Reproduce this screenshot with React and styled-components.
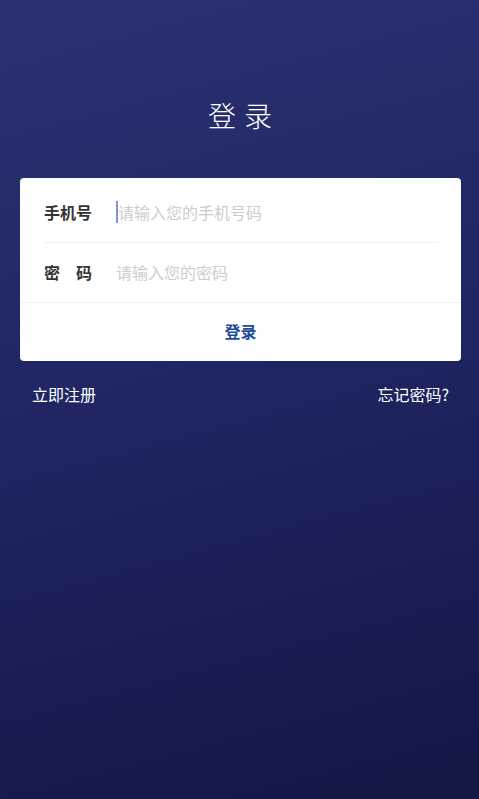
import React from 'react'
import styled, { createGlobalStyle } from 'styled-components'

const GlobalStyle = createGlobalStyle`
    * { box-sizing: border-box; }
    html, body { margin: 0; padding: 0; }
    body {
        font-family: "Noto Sans CJK SC", "Noto Sans", sans-serif;
        background: #1c2260;
    }
`

function App() {
    return (
        <Page>
            <GlobalStyle />
            <Title>登 录</Title>
            <Card>
                <Field divider>
                    <Label>手机号</Label>
                    <Caret />
                    <Input type="tel" placeholder="请输入您的手机号码" />
                </Field>
                <Field>
                    <Label>密　码</Label>
                    <Input type="password" placeholder="请输入您的密码" />
                </Field>
                <Submit>登录</Submit>
            </Card>
            <Links>
                <LinkText>立即注册</LinkText>
                <LinkText>忘记密码?</LinkText>
            </Links>
        </Page>
    )
}

export default App

const Page = styled.div`
    min-height: 100vh;
    padding: 92px 18px 0 20px;
    background: linear-gradient(165deg, #2b3272 0%, #1f2663 45%, #131745 100%);
`
const Title = styled.h1`
    margin: 0;
    height: 46px;
    line-height: 46px;
    text-align: center;
    font-size: 28px;
    font-weight: 300;
    color: #ffffff;
    letter-spacing: 1px;
`
const Card = styled.div`
    margin-top: 40px;
    padding-top: 6px;
    background: #ffffff;
    border-radius: 4px;
`
const Field = styled.div`
    display: flex;
    align-items: center;
    height: 59px;
    padding-bottom: 2px;
    margin: 0 23px 0 24px;
    border-bottom: ${props => props.divider ? '1px solid #f1f1f3' : 'none'};
`
const Label = styled.span`
    width: 72px;
    flex-shrink: 0;
    font-size: 16px;
    font-weight: 700;
    color: #333333;
`
const Caret = styled.span`
    width: 2px;
    height: 22px;
    background: #7f93cf;
    flex-shrink: 0;
`
const Input = styled.input`
    flex: 1;
    min-width: 0;
    border: none;
    outline: none;
    padding: 0;
    font-family: inherit;
    font-size: 16px;
    color: #333333;
    background: transparent;

    &::placeholder {
        color: #cdcdd1;
    }
`
const Submit = styled.button`
    display: block;
    width: 100%;
    height: 59px;
    padding: 0 0 2px;
    border: none;
    border-top: 1px solid #f1f1f3;
    background: transparent;
    font-family: inherit;
    font-size: 16px;
    font-weight: 700;
    color: #1f4d9c;
    cursor: pointer;
`
const Links = styled.div`
    display: flex;
    justify-content: space-between;
    padding: 21px 12px 0 12px;
`
const LinkText = styled.span`
    font-size: 16px;
    color: #ffffff;
    cursor: pointer;
`
